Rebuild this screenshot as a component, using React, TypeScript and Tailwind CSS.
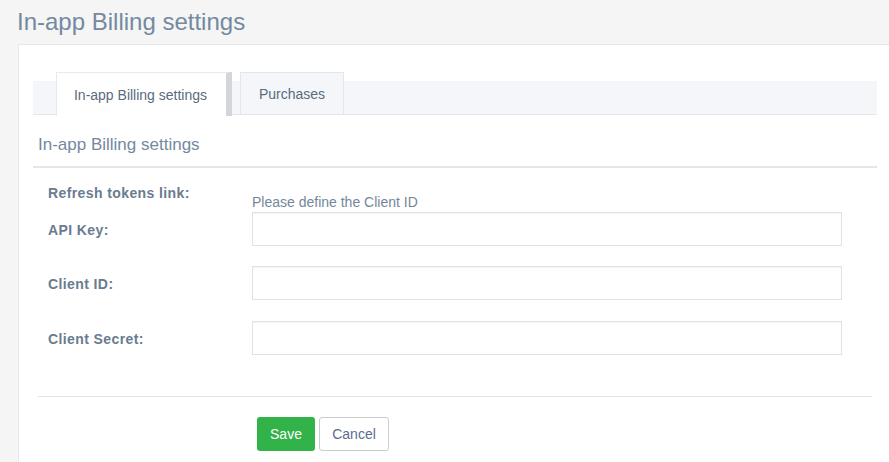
import { useState } from "react";

type Tab = "settings" | "purchases";

const fields = [
  { id: "apiKey", label: "API Key:", gap: "mb-[20px]" },
  { id: "clientId", label: "Client ID:", gap: "mb-[21px]" },
  { id: "clientSecret", label: "Client Secret:", gap: "" },
];

export default function App() {
  const [tab, setTab] = useState<Tab>("settings");
  const [values, setValues] = useState<Record<string, string>>({});

  return (
    <div className="h-[462px] w-full overflow-hidden bg-[#f5f5f5] font-['Liberation_Sans',Arial,sans-serif]">
      {/* PAGE TITLE */}
      <div className="h-[44px] pl-[17px] pt-[8px]">
        <h1 className="text-[24px] leading-[28px] text-[#7489a0]">
          In-app Billing settings
        </h1>
      </div>

      {/* PANEL */}
      <div className="ml-[18px] h-full border-l border-t border-[#e6e8eb] bg-white pl-[14px] pr-[12px] pt-[36px]">
        {/* TABS */}
        <div className="flex h-[34px] border-b border-[#e3e6ea] bg-[#f4f6f9]">
          <button
            onClick={() => setTab("settings")}
            className={
              tab === "settings"
                ? "-mt-[9px] -mb-px ml-[23px] h-[44px] w-[176px] border-l border-t border-r-[6px] border-[#e8eaed] border-r-[#d2d5d9] bg-white pl-[2px] pr-[4px] pt-[2px] text-[14px] text-[#5a6b7d]"
                : "-mt-[9px] ml-[23px] h-[43px] w-[176px] border border-[#e3e6ea] bg-[#f4f6f9] pt-[2px] text-[14px] text-[#5a6b7d]"
            }
          >
            In-app Billing settings
          </button>
          <button
            onClick={() => setTab("purchases")}
            className={
              tab === "purchases"
                ? "-mt-[9px] -mb-px ml-[8px] h-[44px] w-[104px] border-l border-t border-r-[6px] border-[#e8eaed] border-r-[#d2d5d9] bg-white pt-[2px] text-[14px] text-[#5a6b7d]"
                : "-mt-[9px] ml-[8px] h-[43px] w-[104px] border border-[#e3e6ea] bg-[#f4f6f9] pt-[2px] text-[14px] text-[#5a6b7d]"
            }
          >
            Purchases
          </button>
        </div>

        {/* SECTION HEADER */}
        <div className="h-[53px] border-b-2 border-[#e3e6ea] pl-[5px] pt-[20px]">
          <h2 className="text-[17px] leading-[20px] text-[#7489a0]">
            In-app Billing settings
          </h2>
        </div>

        {/* FORM */}
        <div className="pl-[15px] pt-[17px]">
          <div className="flex h-[27px]">
            <label className="w-[204px] text-[14px] font-bold leading-[16px] tracking-[0.4px] text-[#6a7b8f]">
              Refresh tokens link:
            </label>
            <span className="pt-[9px] text-[14px] leading-[16px] text-[#75869a]">
              Please define the Client ID
            </span>
          </div>

          {fields.map((f) => (
            <div key={f.id} className={`flex items-center ${f.gap}`}>
              <label
                htmlFor={f.id}
                className="w-[204px] pt-[2px] text-[14px] font-bold tracking-[0.4px] text-[#6a7b8f]"
              >
                {f.label}
              </label>
              <input
                id={f.id}
                value={values[f.id] ?? ""}
                onChange={(e) => setValues({ ...values, [f.id]: e.target.value })}
                className="h-[34px] w-[590px] border border-[#dfe2e6] bg-white px-3 text-[14px] text-[#555] shadow-[inset_0_1px_1px_rgba(0,0,0,0.05)] outline-none"
              />
            </div>
          ))}
        </div>

        {/* FOOTER */}
        <div className="mx-[5px] mt-[41px] border-t border-[#e5e5e5] pl-[219px] pt-[20px]">
          <div className="flex gap-[4px]">
            <button className="h-[34px] w-[58px] rounded-[3px] bg-[#32b34a] text-[14px] text-white">
              Save
            </button>
            <button className="h-[34px] w-[70px] rounded-[3px] border border-[#cccccc] bg-white text-[14px] text-[#5a6d8c]">
              Cancel
            </button>
          </div>
        </div>
      </div>
    </div>
  );
}
